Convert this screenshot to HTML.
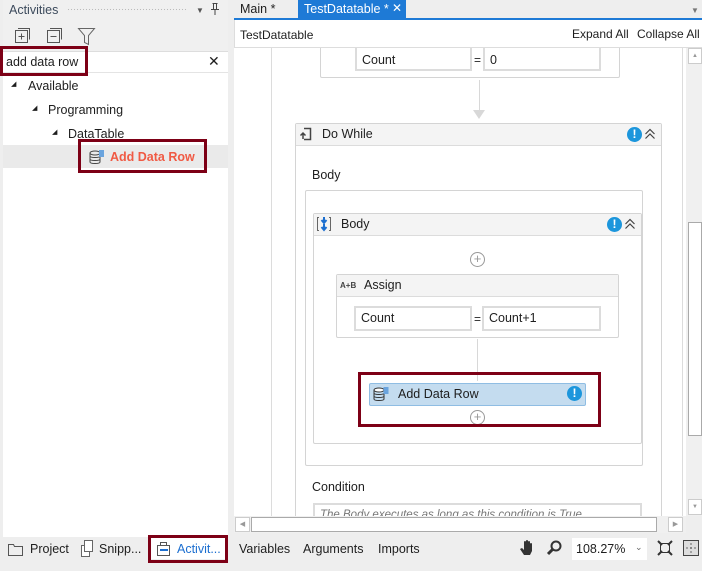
<!DOCTYPE html>
<html><head><meta charset="utf-8"><style>
*{box-sizing:border-box;margin:0;padding:0}
body{width:702px;height:571px;overflow:hidden;background:#eeeeee;font-family:"Liberation Sans",sans-serif;font-size:12px;color:#1e1e1e;position:relative}
.a{position:absolute}
.red{position:absolute;border:3px solid #7d0016}
.hdr{background:#f4f4f4;border-bottom:1px solid #dcdcdc}
.box{position:absolute;border:1px solid #d4d4d4;border-radius:2px;background:#fff}
.fld{position:absolute;border:2px solid #dcdcdc;background:#fff;padding:3px 0 0 5px;font-size:12.5px}
.warn{position:absolute;width:15px;height:15px;border-radius:50%;background:#1c96dc;color:#fff;font-weight:bold;font-size:12px;text-align:center;line-height:15px}
</style></head><body>
<!-- left panel -->
<div class="a" style="left:3px;top:0;width:225px;height:537px;background:#f0f0f0"></div>
<div class="a" style="left:9px;top:3px;font-size:12.5px;color:#3c4a5c">Activities</div>
<div class="a" style="left:67px;top:8px;width:120px;height:4px;background-image:radial-gradient(#bbb 0.6px,transparent 0.8px);background-size:3px 3px"></div>
<div class="a" style="left:196px;top:6px;font-size:8px;color:#555">▼</div>
<svg class="a" style="left:210px;top:2px" width="10" height="14"><path d="M2.5 1.5h5M3.5 1.5v6M6.5 1.5v6M1 7.5h8M5 8v5" fill="none" stroke="#444"/></svg>
<svg class="a" style="left:14px;top:26px" width="90" height="20">
<rect x="1.5" y="4.5" width="12" height="12" fill="none" stroke="#555"/><path d="M4 2.5h11.5v11" fill="none" stroke="#555"/><path d="M4.5 10.5h6M7.5 7.5v6" stroke="#555"/>
<rect x="33.5" y="4.5" width="12" height="12" fill="none" stroke="#555"/><path d="M36 2.5h11.5v11" fill="none" stroke="#555"/><path d="M36.5 10.5h6" stroke="#555"/>
<path d="M64.5 2.5h16l-6 7v9l-4-2v-7z" fill="none" stroke="#666"/></svg>
<div class="a" style="left:3px;top:51px;width:225px;height:486px;background:#fff;border-top:1px solid #ddd"></div>
<div class="a" style="left:6px;top:55px;font-size:12.5px">add data row</div>
<div class="a" style="left:208px;top:53px;font-size:14px">✕</div>
<div class="a" style="left:3px;top:72px;width:225px;height:1px;background:#e4e4e4"></div>
<div class="a" style="left:11px;top:80px;font-size:7px">◢</div><div class="a" style="left:28px;top:79px;font-size:12.5px">Available</div>
<div class="a" style="left:32px;top:104px;font-size:7px">◢</div><div class="a" style="left:48px;top:103px;font-size:12.5px">Programming</div>
<div class="a" style="left:52px;top:128px;font-size:7px">◢</div><div class="a" style="left:68px;top:127px;font-size:12.5px">DataTable</div>
<div class="a" style="left:3px;top:145px;width:225px;height:23px;background:#eaeaea"></div>
<svg class="a" style="left:89px;top:149px" width="16" height="16"><ellipse cx="6" cy="4" rx="5" ry="2" fill="none" stroke="#444"/><path d="M1 4v9c0 2 10 2 10 0V4M1 7c0 2 10 2 10 0M1 10c0 2 10 2 10 0" fill="none" stroke="#444"/><rect x="10" y="1" width="5" height="7" fill="#6aa4de"/></svg>
<div class="a" style="left:110px;top:150px;font-size:12.5px;font-weight:bold;color:#f05a44">Add Data Row</div>
<div class="red" style="left:0;top:46px;width:88px;height:30px"></div>
<div class="red" style="left:78px;top:139px;width:129px;height:34px"></div>
<!-- left bottom tabs -->
<svg class="a" style="left:8px;top:542px" width="16" height="14"><path d="M.5 2.5h5l1 2h8v9H.5z" fill="none" stroke="#555"/></svg>
<div class="a" style="left:30px;top:542px;font-size:12.5px">Project</div>
<svg class="a" style="left:80px;top:540px" width="14" height="18"><rect x="1.5" y="5.5" width="8" height="11" fill="#fff" stroke="#666"/><rect x="4.5" y=".5" width="8" height="11" fill="#fff" stroke="#666"/></svg>
<div class="a" style="left:99px;top:542px;font-size:12.5px">Snipp...</div>
<div class="a" style="left:151px;top:538px;width:74px;height:21px;background:#fff"></div>
<svg class="a" style="left:156px;top:540px" width="16" height="16"><rect x="1.5" y="5.5" width="12" height="10" fill="none" stroke="#555"/><path d="M4.5 5.5v-3h6v3" fill="none" stroke="#555"/><path d="M4 10h8" stroke="#1c6fd0" stroke-width="2"/></svg>
<div class="a" style="left:177px;top:542px;font-size:12.5px;color:#1c6fd0">Activit...</div>
<div class="red" style="left:148px;top:535px;width:80px;height:28px"></div>
<!-- right top tabs -->
<div class="a" style="left:234px;top:0;width:468px;height:20px;background:#eeeeee"></div>
<div class="a" style="left:240px;top:2px;font-size:12.5px">Main *</div>
<div class="a" style="left:298px;top:0;width:108px;height:18px;background:#1e7ad6"></div>
<div class="a" style="left:304px;top:2px;font-size:12.5px;color:#fff">TestDatatable *</div>
<div class="a" style="left:392px;top:1px;font-size:12px;color:#fff">✕</div>
<div class="a" style="left:691px;top:6px;font-size:8px;color:#777">▼</div>
<div class="a" style="left:234px;top:18px;width:468px;height:2px;background:#1e7ad6"></div>
<div class="a" style="left:234px;top:20px;width:468px;height:28px;background:#fff;border-bottom:1px solid #ddd;border-left:1px solid #ddd"></div>
<div class="a" style="left:240px;top:28px;font-size:12px">TestDatatable</div>
<div class="a" style="left:572px;top:27px;font-size:12px">Expand All</div>
<div class="a" style="left:637px;top:27px;font-size:12px">Collapse All</div>
<!-- canvas -->
<div class="a" style="left:234px;top:48px;width:452px;height:468px;background:#fff;overflow:hidden">
 <div class="a" style="left:37px;top:0;width:1px;height:468px;background:#dcdcdc"></div>
 <div class="a" style="left:448px;top:0;width:1px;height:468px;background:#dcdcdc"></div>
 <div class="box" style="left:86px;top:-10px;width:300px;height:40px"></div>
 <div class="fld" style="left:121px;top:-4px;width:117px;height:27px;padding-top:7px">Count</div>
 <div class="a" style="left:240px;top:5px;font-size:12px">=</div>
 <div class="fld" style="left:249px;top:-4px;width:118px;height:27px;padding-top:7px">0</div>
 <div class="a" style="left:245px;top:32px;width:1px;height:32px;background:#d8d8d8"></div>
 <div class="a" style="left:239px;top:62px;border-left:6px solid transparent;border-right:6px solid transparent;border-top:9px solid #d8d8d8"></div>
 <!-- do while -->
 <div class="box" style="left:61px;top:75px;width:367px;height:400px"></div>
 <div class="a hdr" style="left:62px;top:76px;width:365px;height:22px"></div>
 <svg class="a" style="left:64px;top:79px" width="14" height="14"><path d="M6 1.5h6.5v11H6" fill="none" stroke="#444" stroke-width="1.5"/><path d="M5 12V6M2.5 8.5L5 6l2.5 2.5" fill="none" stroke="#444" stroke-width="1.5"/></svg>
 <div class="a" style="left:88px;top:79px;font-size:12.5px">Do While</div>
 <div class="warn" style="left:393px;top:79px">!</div>
 <svg class="a" style="left:410px;top:80px" width="12" height="12"><path d="M1.5 6l4.5-4.5L10.5 6M1.5 10.5L6 6l4.5 4.5" fill="none" stroke="#444" stroke-width="1.2"/></svg>
 <div class="a" style="left:78px;top:120px;font-size:12.5px">Body</div>
 <div class="box" style="left:71px;top:142px;width:338px;height:276px"></div>
 <div class="box" style="left:79px;top:165px;width:329px;height:231px"></div>
 <div class="a hdr" style="left:80px;top:166px;width:327px;height:22px"></div>
 <svg class="a" style="left:82px;top:168px" width="16" height="16"><path d="M3 1.5H1.5v13H3M13 1.5h1.5v13H13" fill="none" stroke="#666"/><path d="M8 1v5M5.5 4L8 7l2.5-3M8 8v5M5.5 11L8 14l2.5-3" fill="none" stroke="#1c6fd0" stroke-width="2"/></svg>
 <div class="a" style="left:107px;top:169px;font-size:12.5px">Body</div>
 <div class="warn" style="left:373px;top:169px">!</div>
 <svg class="a" style="left:390px;top:170px" width="12" height="12"><path d="M1.5 6l4.5-4.5L10.5 6M1.5 10.5L6 6l4.5 4.5" fill="none" stroke="#444" stroke-width="1.2"/></svg>
 <div class="a" style="left:236px;top:204px;width:15px;height:15px;border:1px solid #999;border-radius:50%;color:#999;font-size:13px;line-height:12px;text-align:center">+</div>
 <div class="box" style="left:102px;top:226px;width:283px;height:64px"></div>
 <div class="a hdr" style="left:103px;top:227px;width:281px;height:22px"></div>
 <div class="a" style="left:106px;top:233px;font-size:8px;font-weight:bold;color:#444">A+B</div>
 <div class="a" style="left:130px;top:230px;font-size:12.5px">Assign</div>
 <div class="fld" style="left:120px;top:258px;width:118px;height:25px">Count</div>
 <div class="a" style="left:240px;top:264px;font-size:12px">=</div>
 <div class="fld" style="left:248px;top:258px;width:119px;height:25px">Count+1</div>
 <div class="a" style="left:243px;top:291px;width:1px;height:42px;background:#d8d8d8"></div>
 <div class="a" style="left:135px;top:335px;width:217px;height:23px;background:#c4dcef;border:1px solid #8fbde3;border-radius:2px"></div>
 <svg class="a" style="left:139px;top:338px" width="16" height="17"><ellipse cx="6" cy="4" rx="5" ry="2" fill="#fff" stroke="#333"/><path d="M1 4v9c0 2 10 2 10 0V4M1 7c0 2 10 2 10 0M1 10c0 2 10 2 10 0" fill="none" stroke="#333"/><rect x="10.5" y="1" width="5" height="7" fill="#6aa4de"/></svg>
 <div class="a" style="left:164px;top:339px;font-size:12.5px">Add Data Row</div>
 <div class="warn" style="left:333px;top:338px">!</div>
 <div class="a" style="left:236px;top:362px;width:15px;height:15px;border:1px solid #999;border-radius:50%;color:#999;font-size:13px;line-height:12px;text-align:center">+</div>
 <div class="a" style="left:78px;top:432px;font-size:12.5px">Condition</div>
 <div class="a" style="left:79px;top:455px;width:329px;height:30px;border:2px solid #dcdcdc;padding:4px 5px;font-style:italic;color:#777;font-size:11.5px;white-space:nowrap">The Body executes as long as this condition is True</div>
</div>
<div class="red" style="left:358px;top:372px;width:243px;height:55px"></div>
<!-- scrollbars -->
<div class="a" style="left:686px;top:48px;width:16px;height:468px;background:#f0f0f0"></div>
<div class="a" style="left:688px;top:48px;width:14px;height:16px;border:1px solid #ccc;background:#fff;font-size:6px;color:#999;text-align:center;line-height:14px">▲</div>
<div class="a" style="left:688px;top:222px;width:14px;height:214px;border:1px solid #aaa;background:#fff"></div>
<div class="a" style="left:688px;top:499px;width:14px;height:16px;border:1px solid #ccc;background:#fff;font-size:6px;color:#999;text-align:center;line-height:14px">▼</div>
<div class="a" style="left:234px;top:516px;width:452px;height:17px;background:#f0f0f0"></div>
<div class="a" style="left:235px;top:517px;width:15px;height:15px;border:1px solid #ccc;background:#fff;font-size:7px;color:#999;text-align:center;line-height:13px">◀</div>
<div class="a" style="left:251px;top:517px;width:406px;height:15px;border:1px solid #aaa;background:#fff"></div>
<div class="a" style="left:668px;top:517px;width:15px;height:15px;border:1px solid #ccc;background:#fff;font-size:7px;color:#999;text-align:center;line-height:13px">▶</div>
<!-- bottom bar -->
<div class="a" style="left:239px;top:542px;font-size:12.5px">Variables</div>
<div class="a" style="left:303px;top:542px;font-size:12.5px">Arguments</div>
<div class="a" style="left:378px;top:542px;font-size:12.5px">Imports</div>
<svg class="a" style="left:519px;top:539px" width="18" height="18"><path d="M5 16l-4-6 2-1 2 2V3a1 1 0 0 1 2 0v6V2a1 1 0 0 1 2 0v7V3a1 1 0 0 1 2 0v6V5a1 1 0 0 1 2 0v7l-2 4z" fill="#333"/></svg>
<svg class="a" style="left:546px;top:540px" width="16" height="16"><circle cx="10" cy="6" r="4.5" fill="none" stroke="#333" stroke-width="2"/><path d="M7 9l-5 5" stroke="#333" stroke-width="3"/></svg>
<div class="a" style="left:572px;top:538px;width:75px;height:22px;background:#fff"></div>
<div class="a" style="left:576px;top:542px;font-size:12.5px">108.27%</div>
<div class="a" style="left:635px;top:542px;font-size:9px;color:#666">⌄</div>
<svg class="a" style="left:657px;top:540px" width="16" height="16"><rect x="3.5" y="3.5" width="9" height="9" fill="none" stroke="#333"/><path d="M1 1l4 4M15 1l-4 4M1 15l4-4M15 15l-4-4" stroke="#333" stroke-width="2"/></svg>
<svg class="a" style="left:683px;top:540px" width="16" height="16"><rect x=".5" y=".5" width="15" height="15" fill="#ddd" stroke="#444"/><path d="M8 3v10M3 8h10" stroke="#666" stroke-dasharray="2 2"/></svg>
</body></html>
